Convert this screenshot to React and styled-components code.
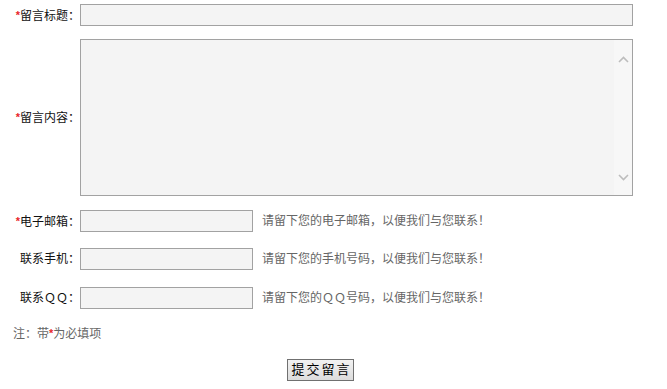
import styled, { createGlobalStyle } from "styled-components";

const GlobalStyle = createGlobalStyle`
  body {
    margin: 0;
    background: #fff;
    font-family: "Liberation Sans", "Noto Sans CJK SC", sans-serif;
    font-size: 12px;
    color: #000;
  }
`;

const Form = styled.form`
  width: 641px;
  padding-top: 4px;
`;

const Row = styled.div`
  display: flex;
  align-items: center;
  margin-bottom: ${({ $mb }) => $mb}px;
`;

const Label = styled.label`
  flex: 0 0 80px;
  text-align: right;
  font-size: 12px;
  line-height: 16px;
  white-space: nowrap;
  color: #111;
`;

const Star = styled.span`
  color: #e8262a;
  font-family: "Liberation Sans", sans-serif;
  font-size: 11px;
  font-weight: bold;
  vertical-align: 1px;
`;

const Input = styled.input`
  box-sizing: border-box;
  width: ${({ $w }) => $w}px;
  height: 22px;
  margin: 0;
  padding: 2px 4px;
  border: 1px solid #a2a2a2;
  background: #f4f4f4;
  font: inherit;
  outline: none;
`;

const AreaBox = styled.div`
  box-sizing: border-box;
  display: flex;
  width: 553px;
  height: 157px;
  border: 1px solid #a2a2a2;
  background: #f4f4f4;
`;

const TextArea = styled.textarea`
  flex: 1;
  margin: 0;
  padding: 4px;
  border: none;
  background: transparent;
  resize: none;
  font: inherit;
  outline: none;
`;

const Track = styled.div`
  flex: 0 0 18px;
  display: flex;
  flex-direction: column;
  justify-content: space-between;
  align-items: center;
  padding: 16px 0 14px;
  background: #f7f7f7;
`;

const Hint = styled.span`
  margin-left: 9px;
  color: #666;
  font-size: 12px;
  line-height: 16px;
`;

const Note = styled.p`
  margin: 0 0 17px 13px;
  color: #666;
  font-size: 12px;
  line-height: 16px;
`;

const Actions = styled.div`
  text-align: center;
`;

const Submit = styled.button`
  box-sizing: border-box;
  width: 67px;
  height: 22px;
  padding: 0 0 0 2px;
  border: 1px solid #707070;
  background: linear-gradient(#f2f2f2, #dcdcdc);
  color: #000;
  font-family: "Liberation Sans", "Noto Sans CJK SC", sans-serif;
  font-size: 13px;
  letter-spacing: 2px;
  line-height: 18px;
  cursor: pointer;
`;

const Chevron = ({ up }) => (
  <svg width="11" height="7" viewBox="0 0 11 7">
    <path
      d={up ? "M1 6 L5.5 1.5 L10 6" : "M1 1 L5.5 5.5 L10 1"}
      fill="none"
      stroke="#bdbdbd"
      strokeWidth="1.6"
    />
  </svg>
);

function App() {
  return (
    <>
      <GlobalStyle />
      <Form>
        <Row $mb={13}>
          <Label>
            <Star>*</Star>留言标题：
          </Label>
          <Input $w={553} />
        </Row>
        <Row $mb={14}>
          <Label>
            <Star>*</Star>留言内容：
          </Label>
          <AreaBox>
            <TextArea />
            <Track>
              <Chevron up />
              <Chevron />
            </Track>
          </AreaBox>
        </Row>
        <Row $mb={16}>
          <Label>
            <Star>*</Star>电子邮箱：
          </Label>
          <Input $w={173} />
          <Hint>请留下您的电子邮箱，以便我们与您联系！</Hint>
        </Row>
        <Row $mb={17}>
          <Label>联系手机：</Label>
          <Input $w={173} />
          <Hint>请留下您的手机号码，以便我们与您联系！</Hint>
        </Row>
        <Row $mb={16}>
          <Label>联系ＱＱ：</Label>
          <Input $w={173} />
          <Hint>请留下您的ＱＱ号码，以便我们与您联系！</Hint>
        </Row>
        <Note>
          注：带<Star>*</Star>为必填项
        </Note>
        <Actions>
          <Submit type="button">提交留言</Submit>
        </Actions>
      </Form>
    </>
  );
}

export default App;
